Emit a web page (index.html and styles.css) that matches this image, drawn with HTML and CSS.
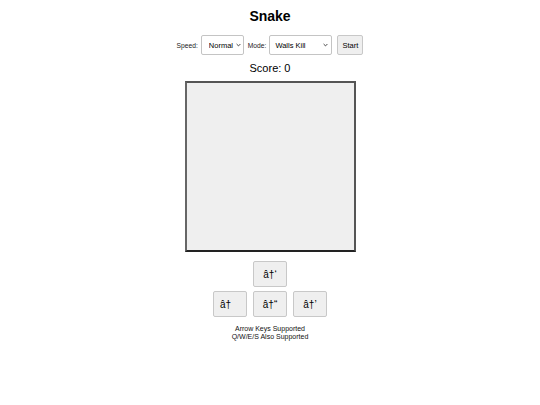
FILE: index.html
```html
<!DOCTYPE html>
<html>
<head>
<meta charset="utf-8">
<link rel="stylesheet" href="styles.css">
</head>
<body>
<div class="page">
  <h1 class="title">Snake</h1>
  <div class="controls">
    <label class="lbl">Speed:</label>
    <div class="selwrap">
      <select class="sel sel-speed"><option>Normal</option></select>
      <svg class="chev" width="5" height="4" viewBox="0 0 5 4"><path d="M0.6 1 L2.5 2.9 L4.4 1" fill="none" stroke="#333" stroke-width="0.9"/></svg>
    </div>
    <label class="lbl lbl-mode">Mode:</label>
    <div class="selwrap">
      <select class="sel sel-mode"><option>Walls Kill</option></select>
      <svg class="chev" width="5" height="4" viewBox="0 0 5 4"><path d="M0.6 1 L2.5 2.9 L4.4 1" fill="none" stroke="#333" stroke-width="0.9"/></svg>
    </div>
    <button class="btn start">Start</button>
  </div>
  <div class="score">Score: 0</div>
  <div class="board"></div>
  <div class="pad">
    <div class="pad-row"><button class="btn arrow">â†‘</button></div>
    <div class="pad-row">
      <button class="btn arrow left">â†</button>
      <button class="btn arrow">â†“</button>
      <button class="btn arrow">â†’</button>
    </div>
  </div>
  <div class="hint">Arrow Keys Supported<br>Q/W/E/S Also Supported</div>
</div>
</body>
</html>
```
FILE: styles.css
```css
html, body {
  margin: 0;
  padding: 0;
  background: #fff;
}
.page {
  font-family: "Liberation Sans", Arial, sans-serif;
  color: #000;
  display: flex;
  flex-direction: column;
  align-items: center;
  padding-top: 8px;
}
.title {
  margin: 0;
  font-size: 14px;
  font-weight: bold;
  line-height: 17px;
}
.controls {
  display: flex;
  align-items: center;
  gap: 3px;
  margin-top: 10px;
  height: 20px;
}
.lbl {
  font-size: 6.7px;
  color: #222;
}
.lbl-mode {
  margin-left: 1px;
}
.selwrap {
  position: relative;
  display: flex;
}
.sel {
  appearance: none;
  -webkit-appearance: none;
  height: 20px;
  font-family: "Liberation Sans", Arial, sans-serif;
  font-size: 7.5px;
  border: 1px solid #c4c4c4;
  border-radius: 2px;
  background: #fff;
  padding: 0 8px 0 6px;
  color: #000;
  outline: none;
}
.chev {
  position: absolute;
  right: 3px;
  top: 8px;
}
.sel-speed { width: 43px; padding-left: 7px; padding-right: 6px; }
.sel-mode { width: 63px; padding-left: 5px; }
.sel-mode + .chev { right: 4px; }
.btn {
  font-family: "Liberation Sans", Arial, sans-serif;
  background: #efefef;
  border: 1px solid #c8c8c8;
  border-radius: 2px;
  color: #000;
  padding: 0;
}
.start {
  height: 20px;
  width: 26px;
  font-size: 7.5px;
  margin-left: 2px;
}
.score {
  font-size: 11px;
  margin-top: 7px;
  line-height: 13px;
}
.board {
  margin-top: 6px;
  width: 167px;
  height: 167px;
  background: #efefef;
  border: 2px solid #333;
  border-left-color: #666;
  border-top-color: #555;
  border-right-color: #555;
  border-bottom-color: #222;
}
.pad {
  margin-top: 9px;
  display: flex;
  flex-direction: column;
  align-items: center;
  gap: 4px;
}
.pad-row {
  display: flex;
  gap: 6px;
}
.arrow {
  width: 34px;
  height: 26px;
  font-size: 10px;
}
.arrow.left {
  text-align: left;
  padding-left: 6px;
}
.hint {
  margin-top: 8px;
  font-size: 7px;
  line-height: 8px;
  text-align: center;
  color: #111;
}
```
